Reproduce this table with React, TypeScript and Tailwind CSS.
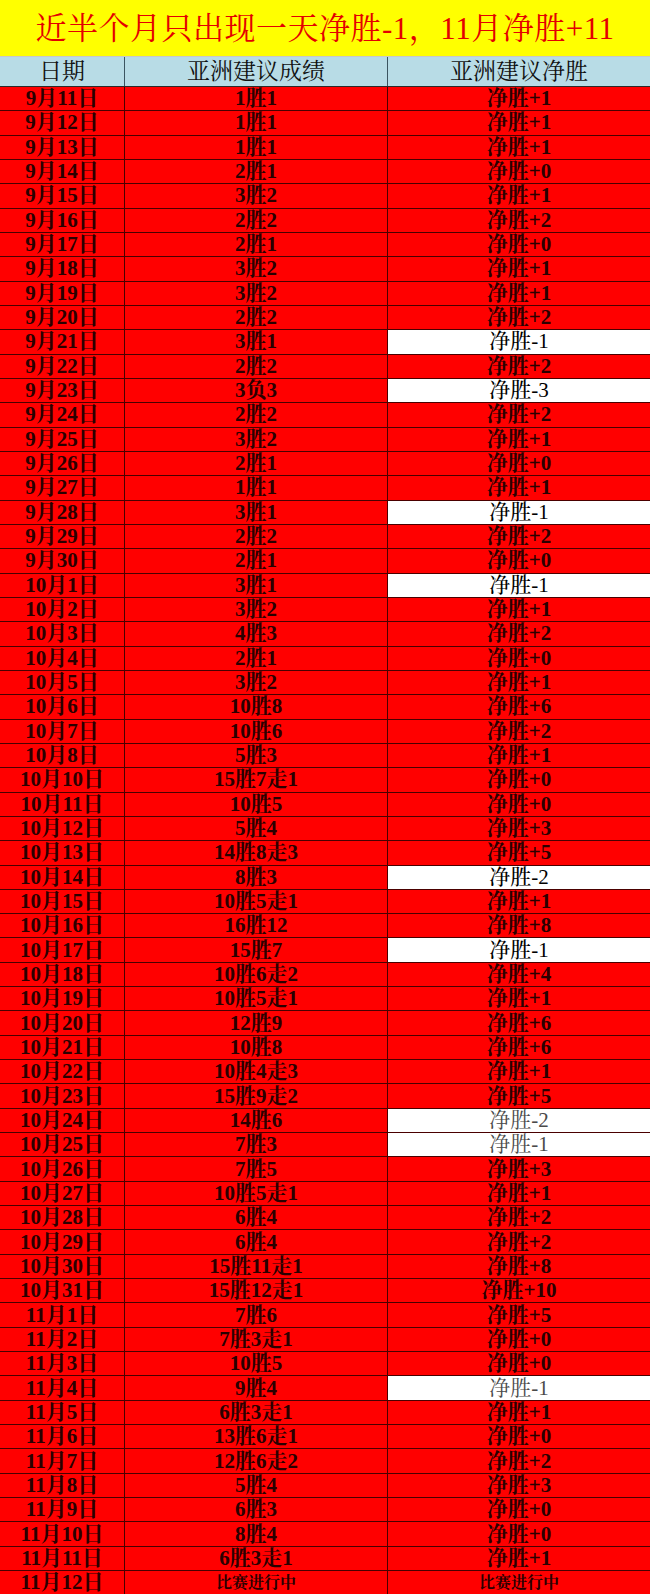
import React from "react";

type Row = { date: string; record: string; net: string; tone?: "white" | "gray" };

const ROWS: Row[] = [
  { date: "9月11日", record: "1胜1", net: "净胜+1" },
  { date: "9月12日", record: "1胜1", net: "净胜+1" },
  { date: "9月13日", record: "1胜1", net: "净胜+1" },
  { date: "9月14日", record: "2胜1", net: "净胜+0" },
  { date: "9月15日", record: "3胜2", net: "净胜+1" },
  { date: "9月16日", record: "2胜2", net: "净胜+2" },
  { date: "9月17日", record: "2胜1", net: "净胜+0" },
  { date: "9月18日", record: "3胜2", net: "净胜+1" },
  { date: "9月19日", record: "3胜2", net: "净胜+1" },
  { date: "9月20日", record: "2胜2", net: "净胜+2" },
  { date: "9月21日", record: "3胜1", net: "净胜-1", tone: "white" },
  { date: "9月22日", record: "2胜2", net: "净胜+2" },
  { date: "9月23日", record: "3负3", net: "净胜-3", tone: "white" },
  { date: "9月24日", record: "2胜2", net: "净胜+2" },
  { date: "9月25日", record: "3胜2", net: "净胜+1" },
  { date: "9月26日", record: "2胜1", net: "净胜+0" },
  { date: "9月27日", record: "1胜1", net: "净胜+1" },
  { date: "9月28日", record: "3胜1", net: "净胜-1", tone: "white" },
  { date: "9月29日", record: "2胜2", net: "净胜+2" },
  { date: "9月30日", record: "2胜1", net: "净胜+0" },
  { date: "10月1日", record: "3胜1", net: "净胜-1", tone: "white" },
  { date: "10月2日", record: "3胜2", net: "净胜+1" },
  { date: "10月3日", record: "4胜3", net: "净胜+2" },
  { date: "10月4日", record: "2胜1", net: "净胜+0" },
  { date: "10月5日", record: "3胜2", net: "净胜+1" },
  { date: "10月6日", record: "10胜8", net: "净胜+6" },
  { date: "10月7日", record: "10胜6", net: "净胜+2" },
  { date: "10月8日", record: "5胜3", net: "净胜+1" },
  { date: "10月10日", record: "15胜7走1", net: "净胜+0" },
  { date: "10月11日", record: "10胜5", net: "净胜+0" },
  { date: "10月12日", record: "5胜4", net: "净胜+3" },
  { date: "10月13日", record: "14胜8走3", net: "净胜+5" },
  { date: "10月14日", record: "8胜3", net: "净胜-2", tone: "white" },
  { date: "10月15日", record: "10胜5走1", net: "净胜+1" },
  { date: "10月16日", record: "16胜12", net: "净胜+8" },
  { date: "10月17日", record: "15胜7", net: "净胜-1", tone: "white" },
  { date: "10月18日", record: "10胜6走2", net: "净胜+4" },
  { date: "10月19日", record: "10胜5走1", net: "净胜+1" },
  { date: "10月20日", record: "12胜9", net: "净胜+6" },
  { date: "10月21日", record: "10胜8", net: "净胜+6" },
  { date: "10月22日", record: "10胜4走3", net: "净胜+1" },
  { date: "10月23日", record: "15胜9走2", net: "净胜+5" },
  { date: "10月24日", record: "14胜6", net: "净胜-2", tone: "gray" },
  { date: "10月25日", record: "7胜3", net: "净胜-1", tone: "gray" },
  { date: "10月26日", record: "7胜5", net: "净胜+3" },
  { date: "10月27日", record: "10胜5走1", net: "净胜+1" },
  { date: "10月28日", record: "6胜4", net: "净胜+2" },
  { date: "10月29日", record: "6胜4", net: "净胜+2" },
  { date: "10月30日", record: "15胜11走1", net: "净胜+8" },
  { date: "10月31日", record: "15胜12走1", net: "净胜+10" },
  { date: "11月1日", record: "7胜6", net: "净胜+5" },
  { date: "11月2日", record: "7胜3走1", net: "净胜+0" },
  { date: "11月3日", record: "10胜5", net: "净胜+0" },
  { date: "11月4日", record: "9胜4", net: "净胜-1", tone: "gray" },
  { date: "11月5日", record: "6胜3走1", net: "净胜+1" },
  { date: "11月6日", record: "13胜6走1", net: "净胜+0" },
  { date: "11月7日", record: "12胜6走2", net: "净胜+2" },
  { date: "11月8日", record: "5胜4", net: "净胜+3" },
  { date: "11月9日", record: "6胜3", net: "净胜+0" },
  { date: "11月10日", record: "8胜4", net: "净胜+0" },
  { date: "11月11日", record: "6胜3走1", net: "净胜+1" },
  { date: "11月12日", record: "比赛进行中", net: "比赛进行中" },
];

const FONT = "font-['Liberation_Serif','Noto_Serif_CJK_SC','Noto_Sans_CJK_SC',serif]";

export default function App() {
  return (
    <div className={`flex h-[1594px] w-full flex-col bg-[#ff0000] ${FONT}`}>
      {/* 标题 */}
      <div className="flex h-[57px] shrink-0 items-center justify-center border-b border-[#c8c8c8] bg-[#ffff00]">
        <h1 className="text-[31px] font-normal leading-none tracking-[0.5px] text-[#e40000]">
          近半个月只出现一天净胜-1，11月净胜+11
        </h1>
      </div>

      {/* 表头 */}
      <div className="grid h-[30px] shrink-0 grid-cols-[125px_263px_1fr] border-b border-[#2b2b2b] bg-[#b8dce6] text-[23px] leading-none text-[#111]">
        <div className="flex items-center justify-center border-r border-[#3b5561]">日期</div>
        <div className="flex items-center justify-center border-r border-[#3b5561]">亚洲建议成绩</div>
        <div className="flex items-center justify-center">亚洲建议净胜</div>
      </div>

      {/* 明细 */}
      <div className="flex min-h-0 flex-1 flex-col">
        {ROWS.map((r, i) => {
          const last = i === ROWS.length - 1;
          const text = last ? "text-[16px]" : "text-[21px]";
          return (
            <div
              key={r.date}
              className="grid min-h-0 flex-1 grid-cols-[125px_263px_1fr] border-b border-[#4a0000] leading-none last:border-b-0"
            >
              <div className="flex items-center justify-center border-r border-[#4a0000] text-[21px] font-bold text-[#2a0000]">
                {r.date}
              </div>
              <div
                className={`flex items-center justify-center border-r border-[#4a0000] font-bold text-[#2a0000] ${text}`}
              >
                {r.record}
              </div>
              {r.tone === "white" ? (
                <div className="flex items-center justify-center bg-white text-[21px] font-medium text-black">
                  {r.net}
                </div>
              ) : r.tone === "gray" ? (
                <div className="flex items-center justify-center bg-white text-[21px] font-normal text-[#4a4a4a]">
                  {r.net}
                </div>
              ) : (
                <div className={`flex items-center justify-center font-bold text-[#2a0000] ${text}`}>
                  {r.net}
                </div>
              )}
            </div>
          );
        })}
      </div>
    </div>
  );
}
